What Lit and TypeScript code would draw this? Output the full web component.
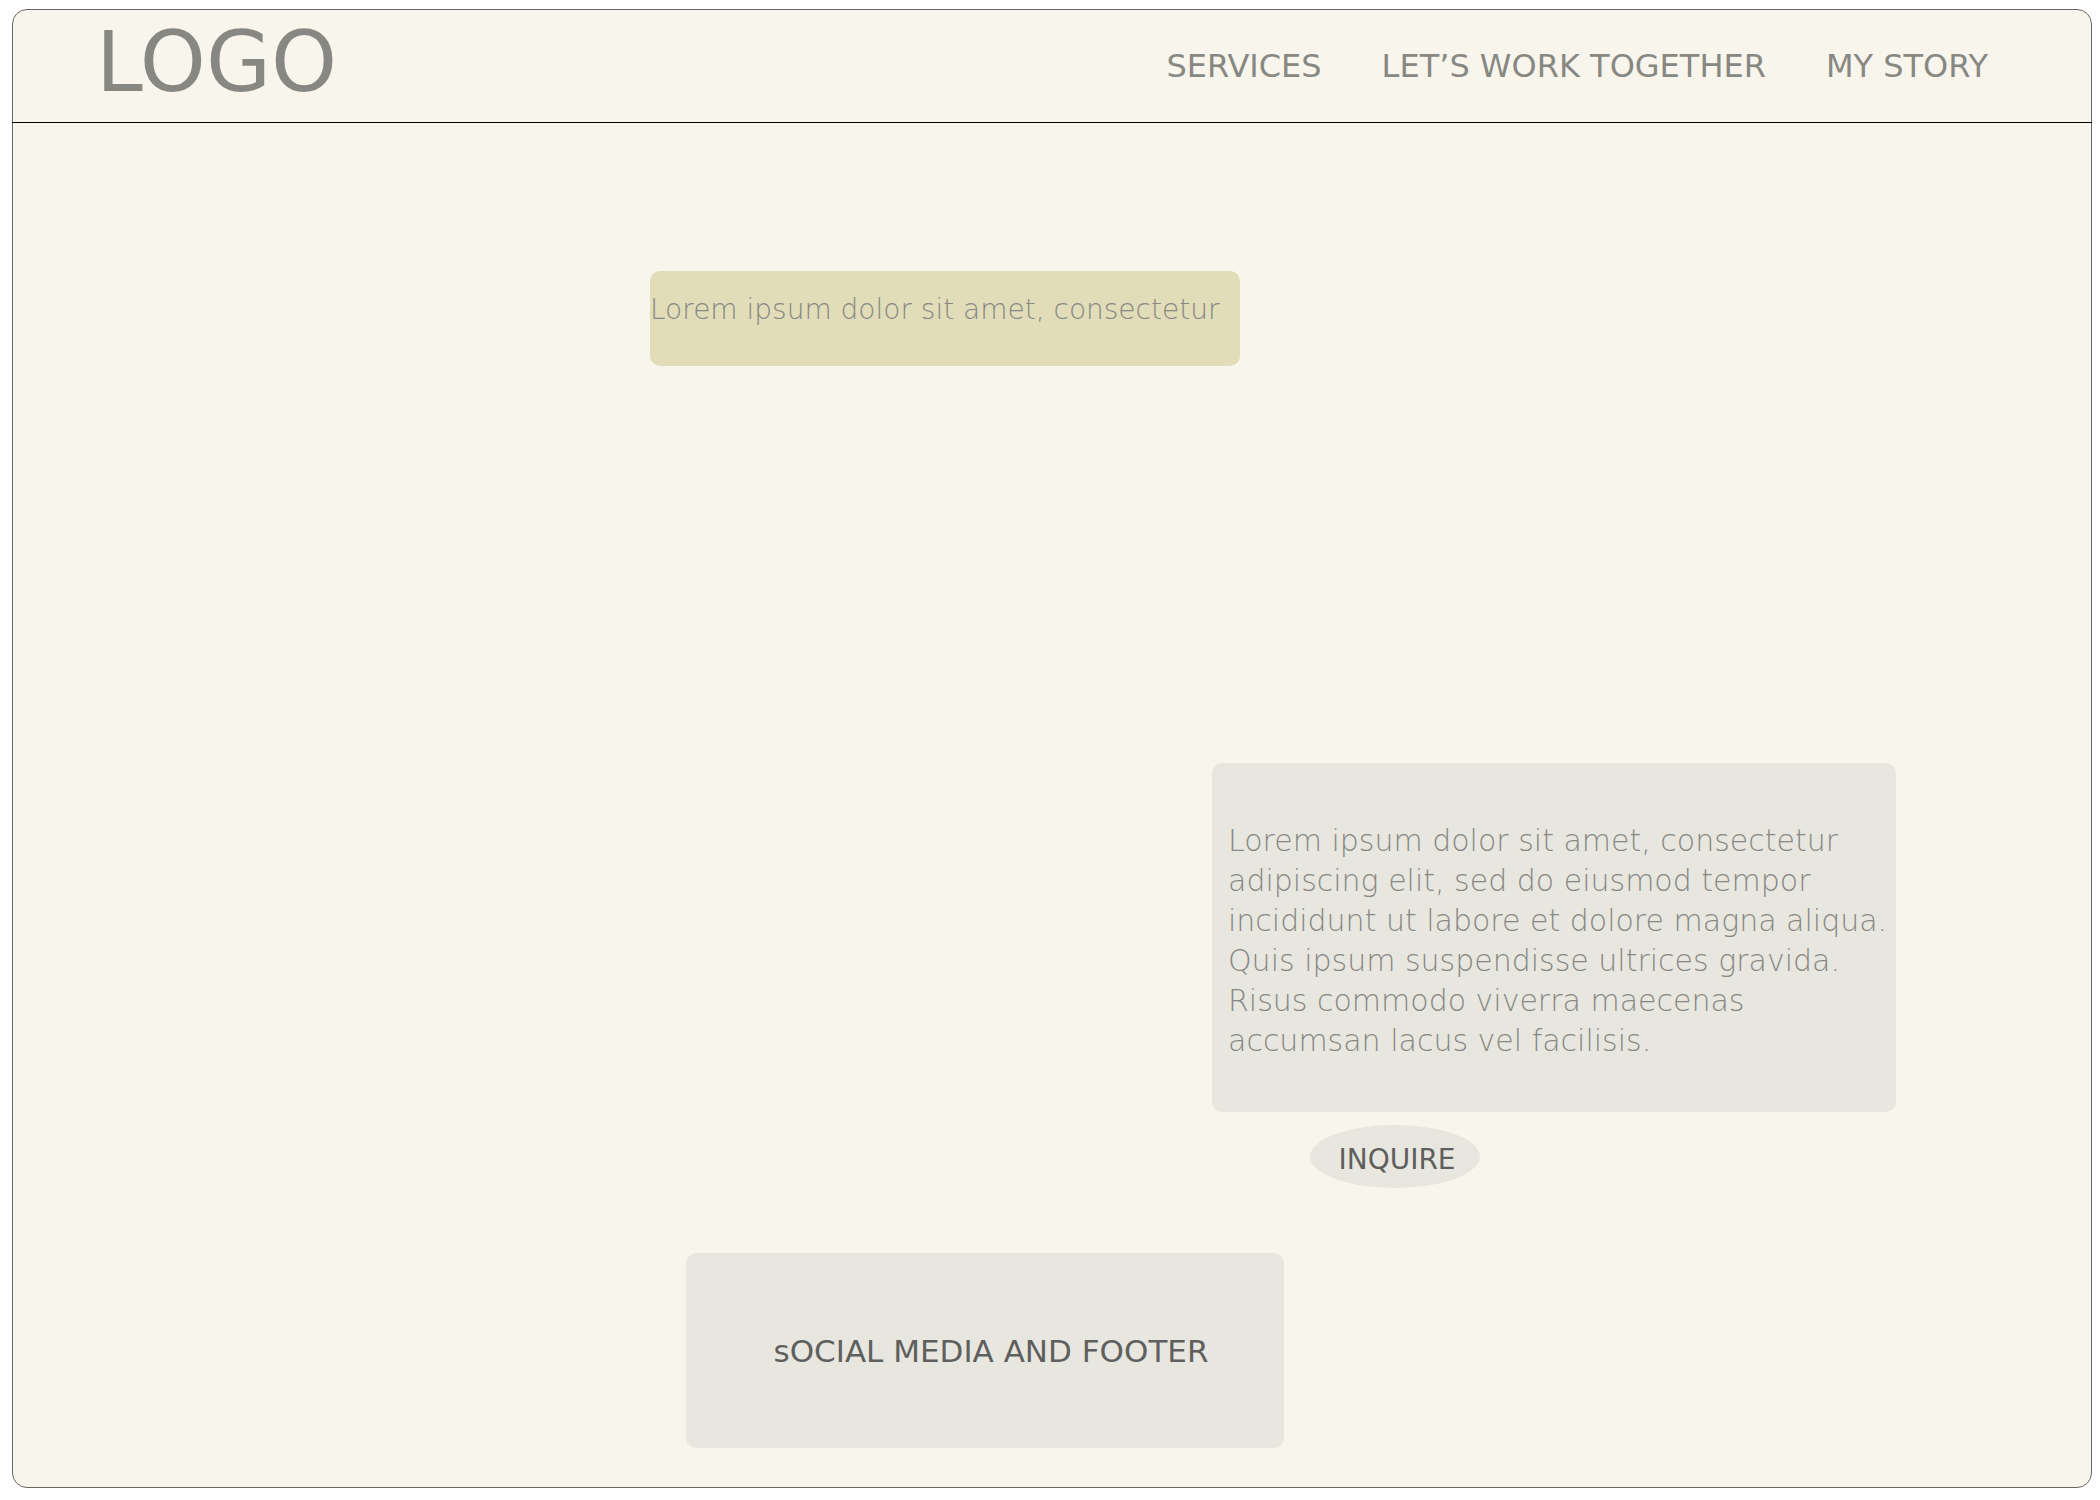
import { LitElement, html, css } from "lit";
import { customElement } from "lit/decorators.js";

const NAV_LINKS = [
  { label: "SERVICES", href: "#services" },
  { label: "LET’S WORK TOGETHER", href: "#work" },
  { label: "MY STORY", href: "#story" },
];

const BANNER = "Lorem ipsum dolor sit amet, consectetur";

const INTRO_LINES = [
  "Lorem ipsum dolor sit amet, consectetur",
  "adipiscing elit, sed do eiusmod tempor",
  "incididunt ut labore et dolore magna aliqua.",
  "Quis ipsum suspendisse ultrices gravida.",
  "Risus commodo viverra maecenas",
  "accumsan lacus vel facilisis.",
];

@customElement("app-root")
export class AppRoot extends LitElement {
  static styles = css`
    :host {
      display: flex;
      box-sizing: border-box;
      min-height: 100vh;
      padding: 9px 8px 12px 12px;
      background: #ffffff;
      color: #888883;
      font-family: "DejaVu Sans", sans-serif;
    }
    .frame {
      flex: 1;
      min-width: 0;
      display: flex;
      flex-direction: column;
      border: 1px solid #666663;
      border-radius: 15px;
      background: #f8f5ed;
    }
    .header {
      display: flex;
      align-items: center;
      justify-content: space-between;
      margin: 0 -1px;
      padding: 2px 104px 10px 84px;
      border-bottom: 1px solid #000000;
    }
    .logo {
      color: inherit;
      text-decoration: none;
      font-size: 84px;
      line-height: 100px;
    }
    .nav {
      display: flex;
      flex-wrap: wrap;
      gap: 60px;
    }
    .nav a {
      color: inherit;
      text-decoration: none;
      font-size: 32px;
      line-height: 40px;
      padding-top: 8px;
    }
    .main {
      flex: 1;
      display: flex;
      flex-direction: column;
      padding-top: 148px;
    }
    .row {
      display: grid;
    }
    .row > * {
      grid-column: 2;
    }
    .banner-row {
      grid-template-columns: 637fr 590fr 851fr;
    }
    .intro-row {
      grid-template-columns: 1199fr 684fr 195fr;
      margin-top: auto;
    }
    .footer-row {
      grid-template-columns: 673fr 598fr 807fr;
      padding: 65px 0 39px;
    }
    .banner,
    .intro {
      margin: 0;
      font-weight: 200;
      line-height: 40px;
      border-radius: 10px;
    }
    .banner {
      padding: 19px 0 36px;
      background: #e1ddb9;
      font-size: 28px;
    }
    .intro {
      padding: 58px 8px 51px 16px;
      background: #e7e7df;
      font-size: 30px;
      white-space: pre-line;
    }
    .inquire {
      justify-self: start;
      width: 170px;
      height: 63px;
      margin: 13px 0 0 98px;
      padding: 6px 0 0 4px;
      border: 0;
      border-radius: 50%;
      background: #e7e7df;
      color: #5f5f5d;
      font: 28px/40px "DejaVu Sans", sans-serif;
      cursor: pointer;
    }
    .footer {
      padding: 78px 12px 77px 24px;
      border-radius: 10px;
      background: #e7e7df;
      color: #5f5f5d;
      text-align: center;
      font-size: 31px;
      line-height: 40px;
    }
  `;

  render() {
    return html`
      <div class="frame">
        <header class="header">
          <a class="logo" href="#home">LOGO</a>
          <nav class="nav">
            ${NAV_LINKS.map((l) => html`<a href=${l.href}>${l.label}</a>`)}
          </nav>
        </header>
        <main class="main">
          <div class="row banner-row"><p class="banner">${BANNER}</p></div>
          <div class="row intro-row">
            <p class="intro">${INTRO_LINES.join("\n")}</p>
            <button class="inquire" type="button">INQUIRE</button>
          </div>
        </main>
        <div class="row footer-row">
          <footer class="footer">sOCIAL MEDIA AND FOOTER</footer>
        </div>
      </div>
    `;
  }
}
